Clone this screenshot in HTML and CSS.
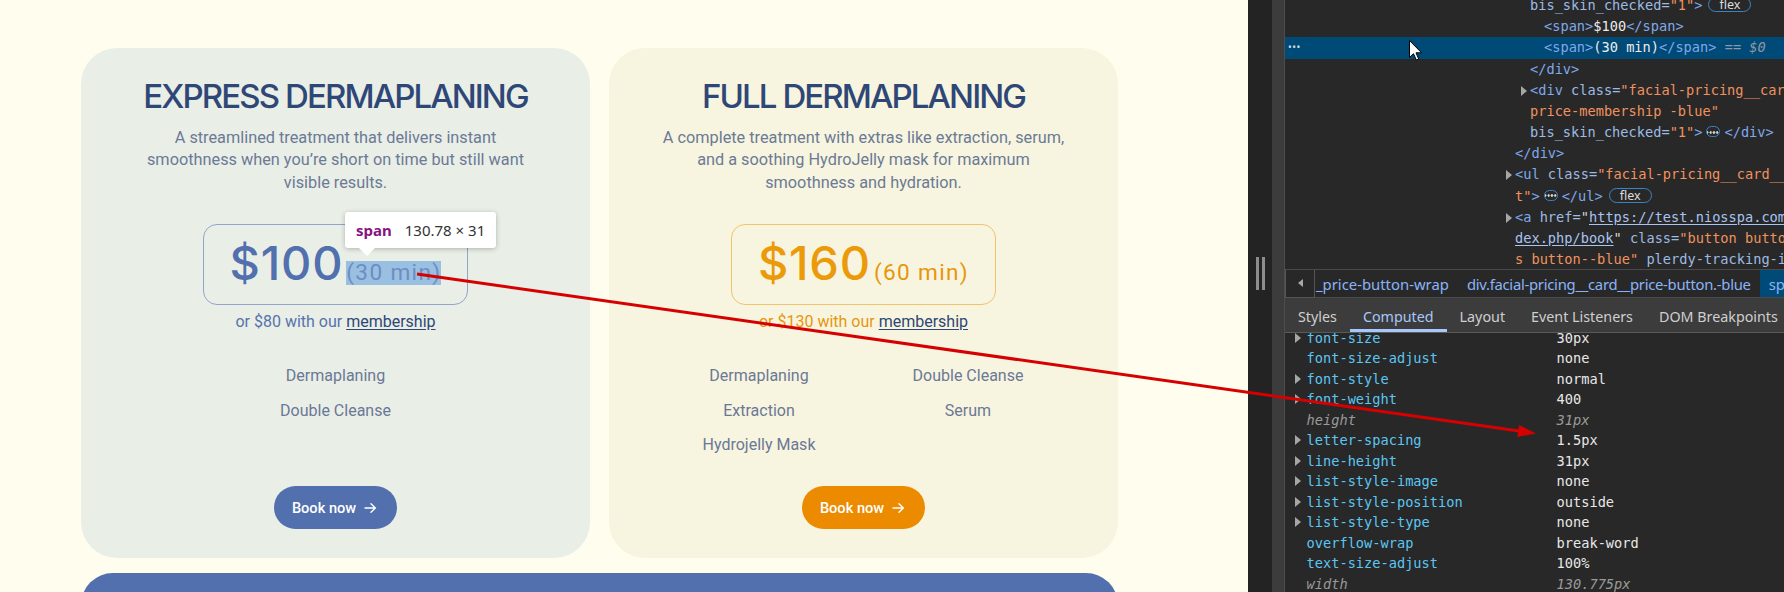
FILE: index.html
```html
<!DOCTYPE html>
<html lang="en">
<head>
<meta charset="utf-8">
<title>Dermaplaning pricing</title>
<link rel="stylesheet" href="styles.css">
</head>
<body>
<div class="screen">
  <main class="page">
    <div class="lead-clip"><p class="lead">Leave with a fresh, smooth and luminous look.</p></div>
    <div class="cards">
      <article class="card card--blue">
        <h2 class="card__title">EXPRESS DERMAPLANING</h2>
        <p class="card__desc">A streamlined treatment that delivers instant smoothness when you’re short on time but still want visible results.</p>
        <div class="price">
          <span class="price__amount">$100</span>
          <span class="price__time is-inspected">(30 min)</span>
        </div>
        <p class="member">or $80 with our <a href="#" class="member__link">membership</a></p>
        <ul class="features">
          <li>Dermaplaning</li>
          <li>Double Cleanse</li>
        </ul>
        <a class="btn btn--blue" href="#">Book now
          <svg class="btn__arrow" width="13" height="12" viewBox="0 0 13 12"><path d="M1 6h10.5M7 1.8l4.3 4.2L7 10.2" fill="none" stroke="#fff" stroke-width="1.4" stroke-linecap="round" stroke-linejoin="round"/></svg>
        </a>
      </article>
      <article class="card card--gold">
        <h2 class="card__title">FULL DERMAPLANING</h2>
        <p class="card__desc">A complete treatment with extras like extraction, serum, and a soothing HydroJelly mask for maximum smoothness and hydration.</p>
        <div class="price price--gold">
          <span class="price__amount">$160</span>
          <span class="price__time">(60 min)</span>
        </div>
        <p class="member member--gold">or $130 with our <a href="#" class="member__link">membership</a></p>
        <ul class="features features--grid">
          <li>Dermaplaning</li>
          <li>Double Cleanse</li>
          <li>Extraction</li>
          <li>Serum</li>
          <li>Hydrojelly Mask</li>
        </ul>
        <a class="btn btn--gold" href="#">Book now
          <svg class="btn__arrow" width="13" height="12" viewBox="0 0 13 12"><path d="M1 6h10.5M7 1.8l4.3 4.2L7 10.2" fill="none" stroke="#fff" stroke-width="1.4" stroke-linecap="round" stroke-linejoin="round"/></svg>
        </a>
      </article>
    </div>
    <div class="band"></div>
  </main>

  <aside class="devtools">
    <div class="dt-gutter"><span class="grip"></span></div>
    <div class="dt-edge"></div>
    <div class="dt-main">
      <div class="tree">
        <div class="tree__inner">
          <div class="row i2"><span class="an">bis_skin_checked</span><span class="an">=</span><span class="av">"1"</span><span class="tg">&gt;</span><span class="badge">flex</span></div>
          <div class="row i3"><span class="tg">&lt;span&gt;</span><span class="tx">$100</span><span class="tg">&lt;/span&gt;</span></div>
          <div class="row i3 sel"><span class="dots">•••</span><span class="tg">&lt;span&gt;</span><span class="tx">(30 min)</span><span class="tg">&lt;/span&gt;</span><span class="eq"> == <i>$0</i></span></div>
          <div class="row i2"><span class="tg">&lt;/div&gt;</span></div>
          <div class="row i2"><span class="tw"></span><span class="tg">&lt;div</span> <span class="an">class</span><span class="an">=</span><span class="av">"facial-pricing__card__</span></div>
          <div class="row i2"><span class="av">price-membership -blue"</span></div>
          <div class="row i2"><span class="an">bis_skin_checked</span><span class="an">=</span><span class="av">"1"</span><span class="tg">&gt;</span><span class="ell"></span><span class="tg">&lt;/div&gt;</span></div>
          <div class="row i1"><span class="tg">&lt;/div&gt;</span></div>
          <div class="row i1"><span class="tw"></span><span class="tg">&lt;ul</span> <span class="an">class</span><span class="an">=</span><span class="av">"facial-pricing__card__lis</span></div>
          <div class="row i1"><span class="av">t"</span><span class="tg">&gt;</span><span class="ell"></span><span class="tg">&lt;/ul&gt;</span><span class="badge">flex</span></div>
          <div class="row i1"><span class="tw"></span><span class="tg">&lt;a</span> <span class="an">href</span><span class="an">=</span><span class="q">"</span><span class="lk">https://test.niosspa.com/in</span></div>
          <div class="row i1"><span class="lk">dex.php/book</span><span class="q">"</span> <span class="an">class</span><span class="an">=</span><span class="av">"button button--arrow</span></div>
          <div class="row i1"><span class="av">s button--blue"</span> <span class="an">plerdy-tracking-id</span></div>
        </div>
      </div>
      <div class="crumbs">
        <span class="crumbs__back"><span class="crumbs__tri"></span></span>
        <span class="crumb crumb--cut">_price-button-wrap</span>
        <span class="crumb crumb--long">div.facial-pricing__card__price-button.-blue</span>
        <span class="crumb crumb--sel">span</span>
      </div>
      <nav class="tabs">
        <span class="tab">Styles</span>
        <span class="tab tab--on">Computed</span>
        <span class="tab">Layout</span>
        <span class="tab">Event Listeners</span>
        <span class="tab">DOM Breakpoints</span>
      </nav>
      <div class="computed">
        <div class="computed__inner">
          <div class="prop"><span class="tw2"></span><span class="pn">font-size</span><span class="pv">30px</span></div>
          <div class="prop"><span></span><span class="pn">font-size-adjust</span><span class="pv">none</span></div>
          <div class="prop"><span class="tw2"></span><span class="pn">font-style</span><span class="pv">normal</span></div>
          <div class="prop"><span class="tw2"></span><span class="pn">font-weight</span><span class="pv">400</span></div>
          <div class="prop prop--dim"><span></span><span class="pn">height</span><span class="pv">31px</span></div>
          <div class="prop"><span class="tw2"></span><span class="pn">letter-spacing</span><span class="pv">1.5px</span></div>
          <div class="prop"><span class="tw2"></span><span class="pn">line-height</span><span class="pv">31px</span></div>
          <div class="prop"><span class="tw2"></span><span class="pn">list-style-image</span><span class="pv">none</span></div>
          <div class="prop"><span class="tw2"></span><span class="pn">list-style-position</span><span class="pv">outside</span></div>
          <div class="prop"><span class="tw2"></span><span class="pn">list-style-type</span><span class="pv">none</span></div>
          <div class="prop"><span></span><span class="pn">overflow-wrap</span><span class="pv">break-word</span></div>
          <div class="prop"><span></span><span class="pn">text-size-adjust</span><span class="pv">100%</span></div>
          <div class="prop prop--dim"><span></span><span class="pn">width</span><span class="pv">130.775px</span></div>
        </div>
      </div>
    </div>
  </aside>
</div>

<div class="tooltip"><b class="tooltip__tag">span</b><span class="tooltip__size">130.78 × 31</span></div>

<svg class="overlay" width="1784" height="592" viewBox="0 0 1784 592">
  <line x1="417" y1="274" x2="1519" y2="431" stroke="#d60000" stroke-width="3"/>
  <polygon points="1536,433.5 1517.3,437 1519.1,425" fill="#d60000"/>
  <path d="M1409.5 40.5v17l4-3.8 2.8 6.3 2.4-1-2.7-6.2h5.6z" fill="#fff" stroke="#000" stroke-width="1" stroke-linejoin="round"/>
</svg>
</body>
</html>
```

FILE: styles.css
```css
* { box-sizing: border-box; margin: 0; padding: 0; }

html, body { width: 1784px; height: 592px; overflow: hidden; }

body {
  position: relative;
  background: #fffdee;
  font-family: Roboto, "Noto Sans", Arial, sans-serif;
}

.screen { display: flex; height: 592px; }

/* ---------- page ---------- */
.page {
  width: 1248px;
  flex: none;
  padding-left: 81px;
  overflow: hidden;
  display: flex;
  flex-direction: column;
  background: #fffdee;
}

.lead-clip { height: 48px; width: 1037px; overflow: hidden; flex: none; }

.lead {
  margin-top: -18px;
  padding-left: 120px;
  text-align: center;
  font-size: 17px;
  line-height: 20px;
  color: #6b7896;
}

.cards { display: flex; gap: 19px; flex: none; }

.card {
  width: 509px;
  height: 510px;
  border-radius: 36px;
  padding: 28px 0 29px;
  display: flex;
  flex-direction: column;
  align-items: center;
}

.card--blue { background: #e9eee7; }
.card--gold { background: #f7f5df; }

.card__title {
  font-family: Inter, "Liberation Sans", sans-serif;
  font-weight: 500;
  font-size: 33px;
  line-height: 40px;
  letter-spacing: -1.9px;
  color: #2e4776;
}

.card__desc {
  margin-top: 11px;
  width: 410px;
  text-align: center;
  font-size: 16.3px;
  line-height: 22.4px;
  color: #6c7a96;
}

.price {
  margin-top: 30px;
  height: 81px;
  padding: 15px 25.5px 0;
  border: 1px solid #93a5c9;
  border-radius: 14px;
  display: flex;
  align-items: baseline;
}

.price--gold { border-color: #f1c36b; }

.price__amount {
  font-family: Inter, "Liberation Sans", sans-serif;
  font-weight: 500;
  font-size: 47px;
  line-height: 46px;
  letter-spacing: 0.8px;
  color: #5170ad;
}

.price--gold .price__amount { color: #eb9a0a; }

.price__time {
  margin-left: 3px;
  font-size: 22.6px;
  line-height: 23.3px;
  letter-spacing: 1.35px;
  color: #6e8cc5;
}

.price--gold .price__time { color: #e8960c; }

.is-inspected { background: rgba(111, 168, 220, 0.66); }

.member {
  margin-top: 7px;
  font-size: 16px;
  line-height: 20px;
  color: #5673ad;
}

.member--gold { color: #e8960c; }

.member__link { color: #2e4776; text-decoration: underline; text-underline-offset: 2px; }

.features {
  margin-top: 34px;
  list-style: none;
  display: flex;
  flex-direction: column;
  align-items: center;
  row-gap: 14.3px;
  font-size: 16px;
  line-height: 20px;
  color: #6b7896;
}

.features--grid {
  display: grid;
  grid-template-columns: 209px 209px;
  justify-items: center;
  column-gap: 0;
  row-gap: 14.3px;
}

.btn {
  margin-top: auto;
  height: 43px;
  padding: 0 20px 0 18px;
  border-radius: 22px;
  display: flex;
  align-items: center;
  gap: 8px;
  color: #fff;
  text-decoration: none;
  font-size: 14.6px;
  font-weight: 500;
}

.btn--blue { background: #5170ad; }
.btn--gold { background: #ec8b00; }

.band {
  margin-top: 15px;
  width: 1037px;
  height: 40px;
  flex: none;
  background: #5170ad;
  border-radius: 32px 32px 0 0;
}

/* ---------- devtools ---------- */
.devtools {
  width: 536px;
  flex: none;
  display: flex;
  background: #282828;
  color: #e3e3e3;
}

.dt-gutter {
  width: 24px;
  flex: none;
  background: #232323;
  padding-top: 257px;
  display: flex;
  justify-content: center;
}

.grip {
  width: 9px;
  height: 33px;
  border-left: 3px solid #8d8d8d;
  border-right: 3px solid #8d8d8d;
}

.dt-edge {
  width: 13px;
  flex: none;
  background: #3c3c3c;
  border-right: 1px solid #4d4d4d;
}

.dt-main {
  width: 499px;
  flex: none;
  display: flex;
  flex-direction: column;
  overflow: hidden;
}

.tree {
  height: 269px;
  flex: none;
  overflow: hidden;
  font-family: "DejaVu Sans Mono", "Liberation Mono", monospace;
  font-size: 13.65px;
  line-height: 21.17px;
  white-space: nowrap;
}

.tree__inner { margin-top: -4.9px; }

.row { height: 21.17px; display: block; }
.i1 { padding-left: 230px; }
.i2 { padding-left: 245px; }
.i3 { padding-left: 259px; }

.sel { background: #004a77; }

.dots {
  display: inline-block;
  width: 259px;
  margin-left: -259px;
  padding-left: 3px;
  font-family: "Noto Sans", sans-serif;
  font-size: 10px;
  letter-spacing: 0.5px;
  vertical-align: top;
  color: #cfd8e3;
}

.tg { color: #7fa9eb; }
.an { color: #9dbbe3; }
.av { color: #f0925f; }
.tx { color: #ececec; }
.q { color: #d8d8d8; }
.lk { color: #a9c4f0; text-decoration: underline; text-underline-offset: 2px; }
.eq { color: #8e98a6; white-space: pre; }

.tw {
  display: inline-block;
  vertical-align: -1px;
  width: 0;
  height: 0;
  margin-left: -9px;
  margin-right: 3px;
  border-left: 6px solid #a6a6a6;
  border-top: 5px solid transparent;
  border-bottom: 5px solid transparent;
}

.badge {
  display: inline-block;
  vertical-align: 1px;
  margin-left: 6px;
  padding: 0 10px;
  height: 15px;
  line-height: 13px;
  border: 1px solid #3b84c4;
  border-radius: 8px;
  font-family: "Noto Sans", sans-serif;
  font-size: 12.5px;
  color: #dcdcdc;
}

.ell {
  display: inline-block;
  vertical-align: 0;
  width: 14px;
  height: 11px;
  margin: 0 4px;
  border: 1px solid #3b84c4;
  border-radius: 6px;
  background:
    radial-gradient(circle, #dcdcdc 0 1px, transparent 1.4px) 2px 3.5px / 3.3px 3px repeat-x;
}

.crumbs {
  height: 29px;
  flex: none;
  border-top: 1px solid #4a4a4a;
  border-bottom: 1px solid #4a4a4a;
  display: flex;
  align-items: center;
  white-space: nowrap;
  font-family: "Noto Sans", sans-serif;
  font-size: 14.85px;
  color: #8ab4f8;
}

.crumbs__back {
  width: 30px;
  height: 28px;
  flex: none;
  border: 1px solid #555;
  border-top: none;
  display: flex;
  align-items: center;
  justify-content: center;
}

.crumbs__tri {
  width: 0;
  height: 0;
  border-right: 5px solid #a8a8a8;
  border-top: 4px solid transparent;
  border-bottom: 4px solid transparent;
}

.crumb { padding: 0 9px; height: 100%; display: flex; align-items: center; flex: none; }
.crumb--cut { padding-left: 1px; }
.crumb--long { letter-spacing: -0.28px; }
.crumb--sel { background: #004a77; }

.tabs {
  height: 35px;
  flex: none;
  padding-top: 2px;
  background: #3c3c3c;
  border-bottom: 1px solid #5a5a5a;
  display: flex;
  font-family: "Noto Sans", sans-serif;
  font-size: 14.3px;
  color: #cfcfcf;
  white-space: nowrap;
}

.tab { padding: 0 13px; display: flex; align-items: center; flex: none; }
.tab--on { color: #a8c7fa; box-shadow: inset 0 -3px 0 #a8c7fa; }

.computed { flex: 1; overflow: hidden; }
.computed__inner { margin-top: -5.5px; }

.prop {
  height: 20.5px;
  display: grid;
  grid-template-columns: 21.6px 250px 1fr;
  align-items: center;
  font-family: "DejaVu Sans Mono", "Liberation Mono", monospace;
  font-size: 13.65px;
  white-space: nowrap;
}

.pn { color: #5cc6f2; }
.pv { color: #e8e8e8; }
.prop--dim .pn, .prop--dim .pv { color: #9a9a9a; font-style: italic; }

.tw2 {
  justify-self: end;
  margin-right: 6px;
  width: 0;
  height: 0;
  border-left: 6px solid #a6a6a6;
  border-top: 5px solid transparent;
  border-bottom: 5px solid transparent;
}

/* ---------- overlays ---------- */
.tooltip {
  position: absolute;
  left: 345px;
  top: 212px;
  width: 151px;
  height: 36px;
  padding-left: 11px;
  display: flex;
  align-items: center;
  gap: 13px;
  background: #fff;
  border-radius: 3px;
  box-shadow: 0 1px 5px rgba(0, 0, 0, 0.25);
  font-family: "Noto Sans", sans-serif;
  font-size: 15px;
  color: #333;
}

.tooltip::after {
  content: "";
  position: absolute;
  left: 14px;
  bottom: -8px;
  border-top: 8px solid #fff;
  border-left: 8px solid transparent;
  border-right: 8px solid transparent;
}

.tooltip__tag { color: #881280; font-weight: 700; }

.overlay { position: absolute; left: 0; top: 0; pointer-events: none; }
```
